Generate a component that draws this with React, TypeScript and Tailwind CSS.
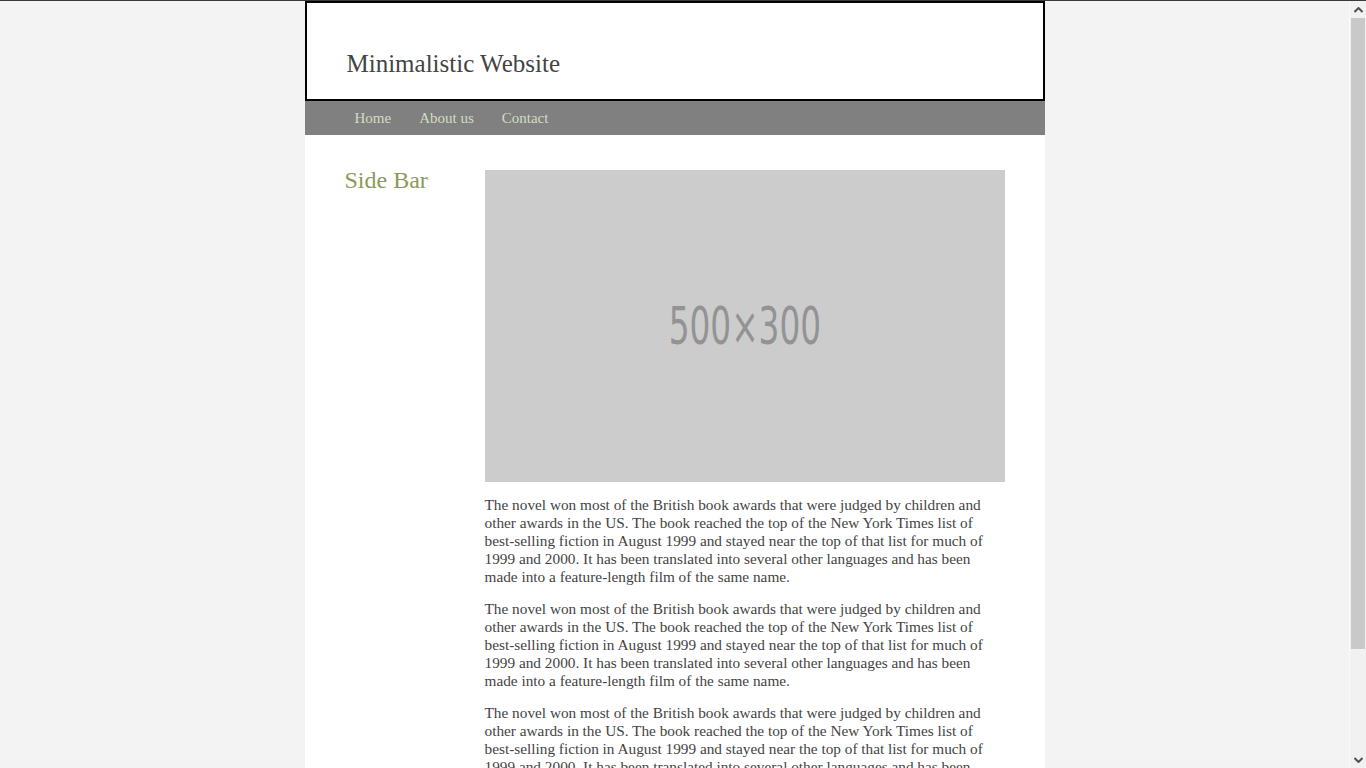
import React from "react";

const lines = [
  "The novel won most of the British book awards that were judged by children and",
  "other awards in the US. The book reached the top of the New York Times list of",
  "best-selling fiction in August 1999 and stayed near the top of that list for much of",
  "1999 and 2000. It has been translated into several other languages and has been",
  "made into a feature-length film of the same name.",
];

const serif = { fontFamily: '"Liberation Serif", "Times New Roman", serif' };

const ScrollBar: React.FC = () => (
  <div className="w-[17px] shrink-0 border-l border-[#fafafa] bg-[#f1f1f1] flex flex-col">
    <div className="h-[17px] flex items-center justify-center">
      <svg width="9" height="6" viewBox="0 0 9 6">
        <path d="M0.5 5 L4.5 1 L8.5 5" fill="none" stroke="#505050" strokeWidth="2" />
      </svg>
    </div>
    <div className="h-[631px] mx-[1px] bg-[#c9c9c9]" />
    <div className="flex-1" />
    <div className="h-[17px] flex items-center justify-center">
      <svg width="9" height="6" viewBox="0 0 9 6">
        <path d="M0.5 1 L4.5 5 L8.5 1" fill="none" stroke="#505050" strokeWidth="2" />
      </svg>
    </div>
  </div>
);

const App: React.FC = () => {
  const links = ["Home", "About us", "Contact"];

  return (
    <div className="h-screen flex overflow-hidden bg-[#f3f3f3] border-t border-[#3a3a3a]" style={serif}>
      <div className="flex-1 overflow-hidden">
        <div className="w-[740px] mx-auto">
          <header className="h-[100px] bg-white border-2 border-black">
            <h1 className="pt-[46px] pl-[40px] text-[25px] leading-[29px] text-[#444]">
              Minimalistic Website
            </h1>
          </header>

          <nav className="h-[34px] bg-[#808080] flex items-center pl-[50px] gap-[28px]">
            {links.map((l) => (
              <a key={l} href="#" className="text-[15px] text-[#d2dcc3]">
                {l}
              </a>
            ))}
          </nav>

          <div className="bg-white flex px-[40px] pt-[35px] pb-[96px]">
            <aside className="w-[140px] shrink-0">
              <h2 className="text-[24px] leading-[20px] text-[#8a9a5b]">Side Bar</h2>
            </aside>

            <main className="w-[520px]">
              <div className="h-[312px] bg-[#cccccc] flex items-center justify-center overflow-hidden">
                <span
                  className="text-[52px] leading-none text-[#939393] scale-x-[0.7]"
                  style={{ fontFamily: '"DejaVu Sans Condensed", "DejaVu Sans", sans-serif' }}
                >
                  500×300
                </span>
              </div>
              {[0, 1, 2].map((i) => (
                <p key={i} className="mt-[14px] text-[15.3px] leading-[18px] text-[#444] whitespace-nowrap">
                  {lines.map((line, j) => (
                    <React.Fragment key={j}>
                      {line}
                      {j < lines.length - 1 && <br />}
                    </React.Fragment>
                  ))}
                </p>
              ))}
            </main>
          </div>
        </div>
      </div>
      <ScrollBar />
    </div>
  );
};

export default App;
